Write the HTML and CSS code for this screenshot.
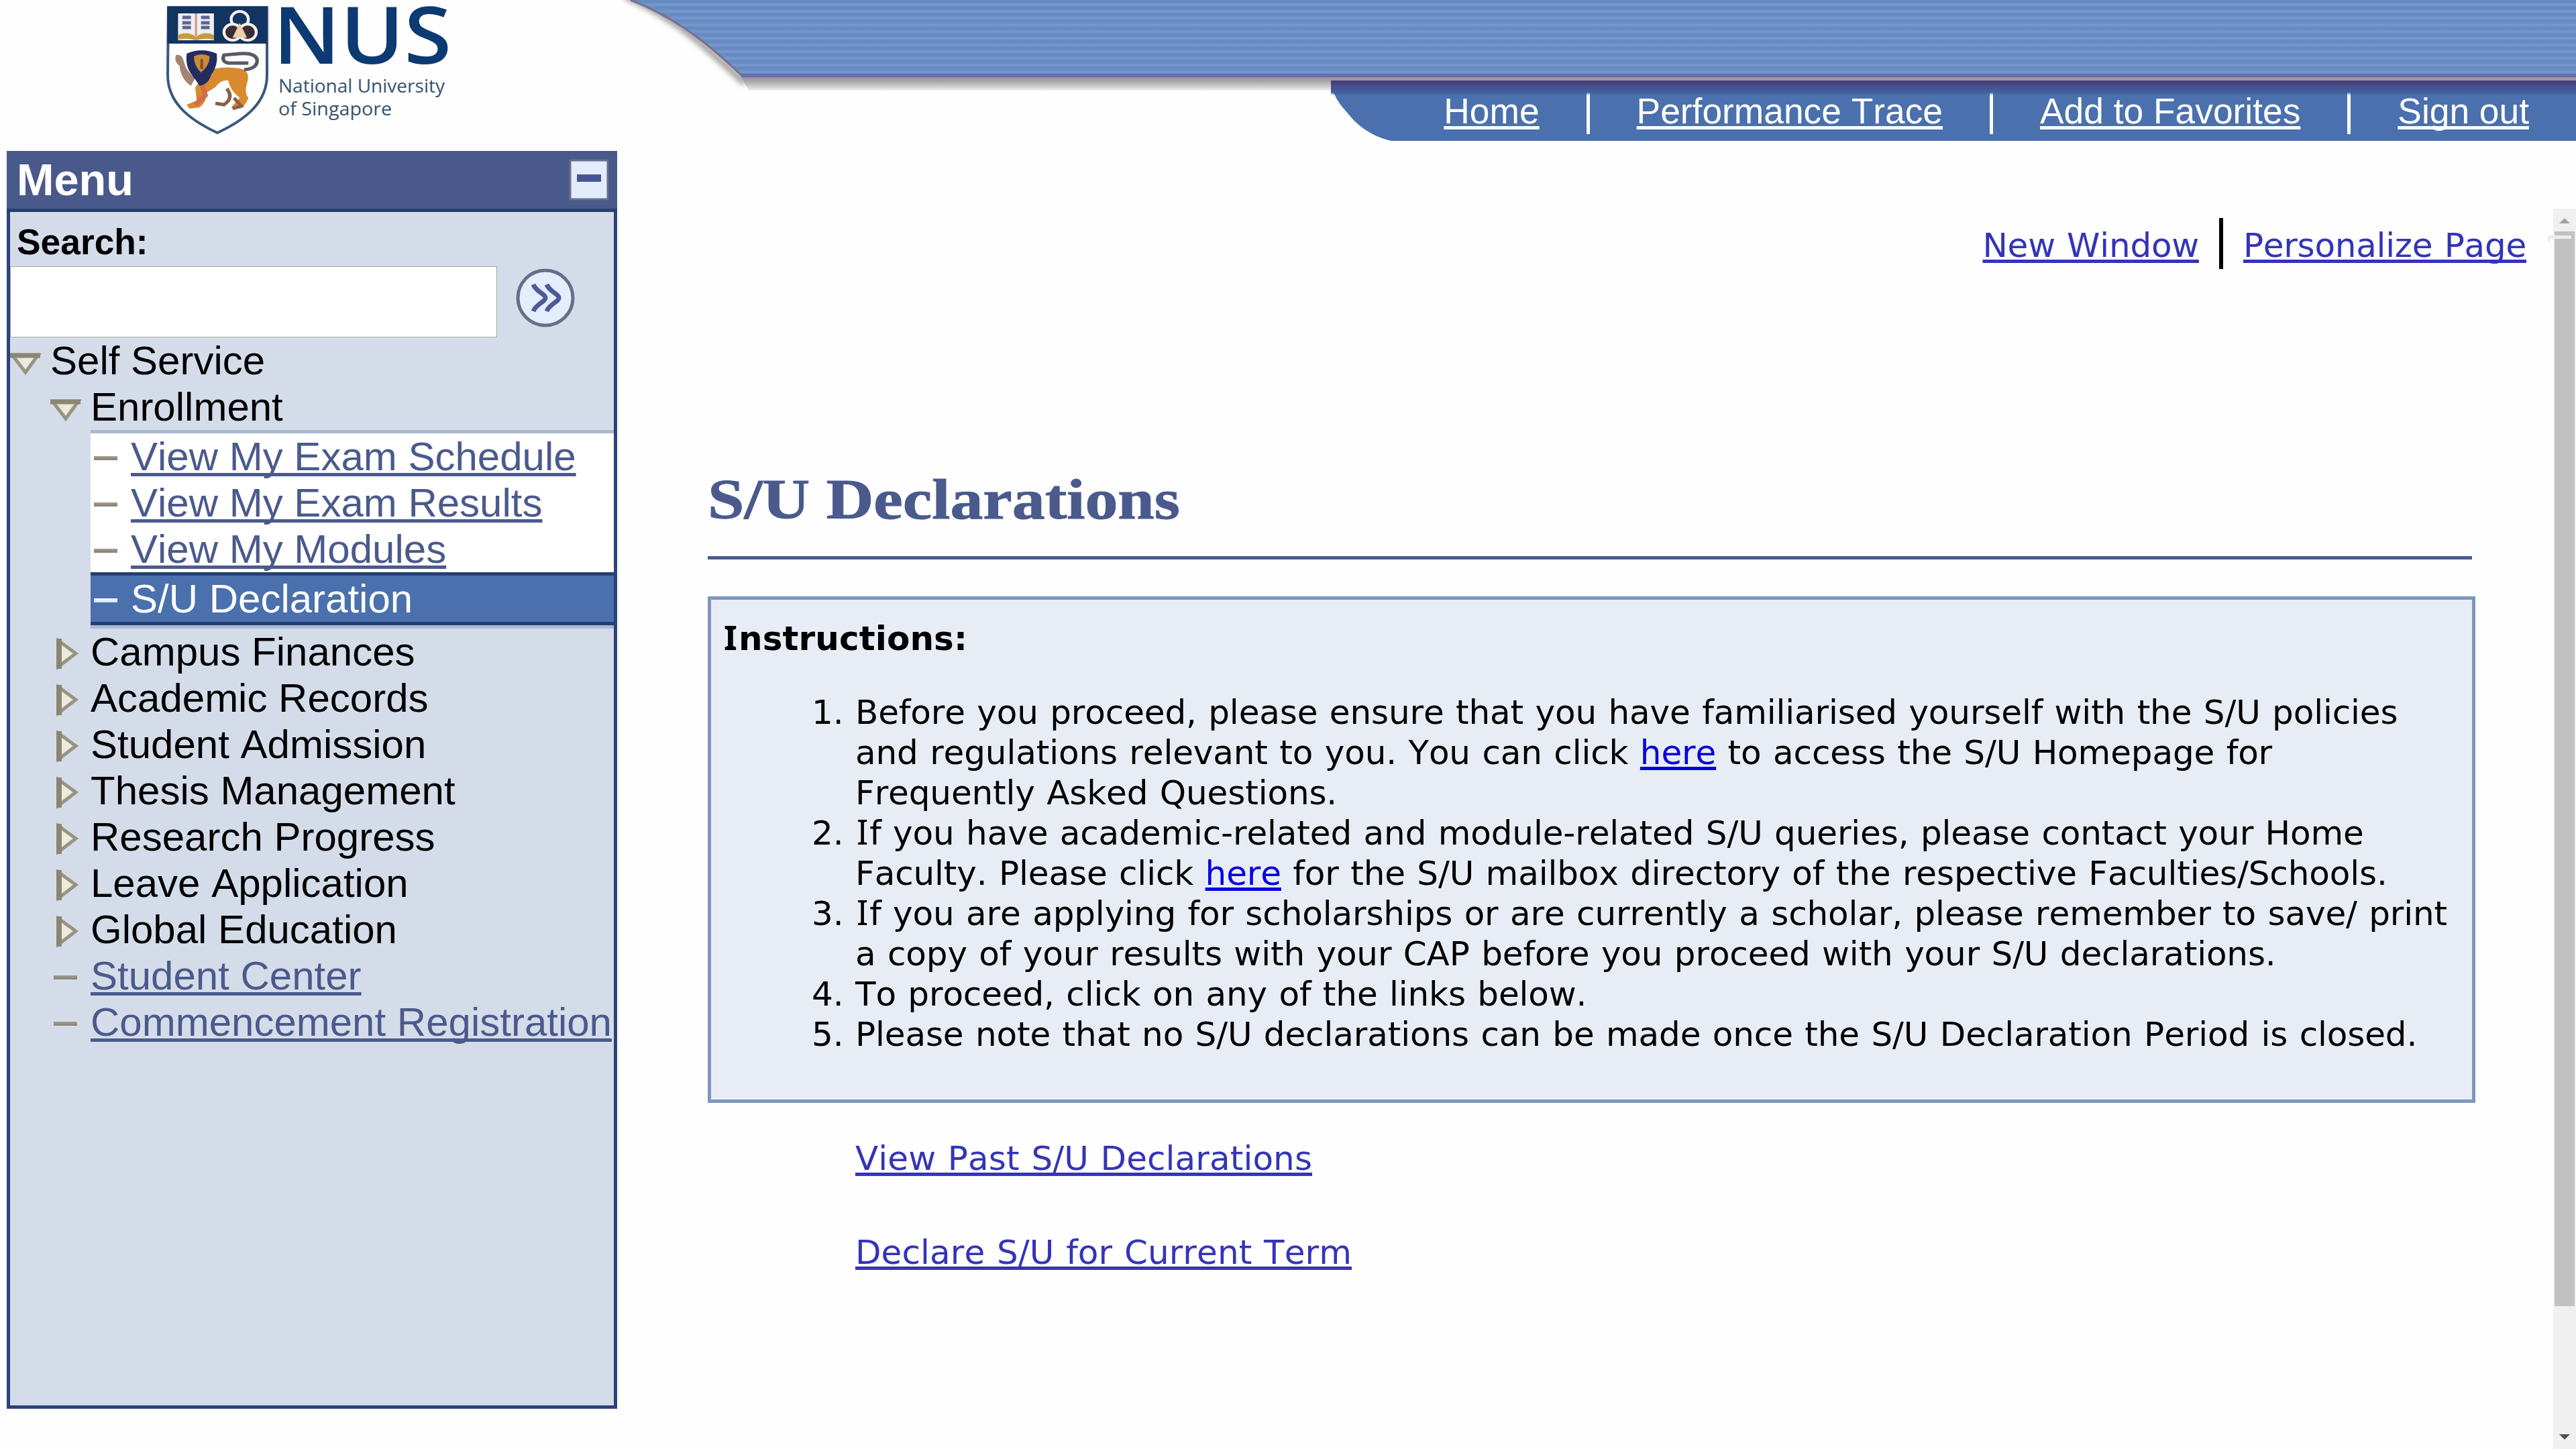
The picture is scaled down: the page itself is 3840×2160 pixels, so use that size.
FILE: index.html
```html
<!DOCTYPE html>
<html lang="en">
<head>
<meta charset="utf-8">
<title>S/U Declarations</title>
<link rel="stylesheet" href="styles.css">
</head>
<body>
<header class="top">
  <svg class="banner" viewBox="0 0 2920 140" width="2920" height="140" aria-hidden="true">
    <defs>
      <linearGradient id="stripe" x1="0" y1="0" x2="0" y2="10" gradientUnits="userSpaceOnUse" spreadMethod="repeat">
        <stop offset="0" stop-color="#678cc4"/><stop offset=".3" stop-color="#658ac1"/><stop offset=".72" stop-color="#789ace"/><stop offset="1" stop-color="#678cc4"/>
      </linearGradient>
      <linearGradient id="shade" x1="0" y1="115" x2="0" y2="136" gradientUnits="userSpaceOnUse">
        <stop offset="0" stop-color="#928e98"/><stop offset=".4" stop-color="#b3b1b4"/><stop offset=".95" stop-color="#efefef"/><stop offset="1" stop-color="#fff"/>
      </linearGradient>
      <filter id="soft" x="-20%" y="-20%" width="140%" height="140%"><feGaussianBlur stdDeviation="4"/></filter>
    </defs>
    <path d="M12 -6C76 22 116 56 140 78C160 96 176 110 190 124" fill="none" stroke="#8f8a8c" stroke-width="8" filter="url(#soft)"/>
    <path d="M184 113H2920V135H196Z" fill="url(#shade)"/>
    <path d="M20 0H2920V115H188C160 88 100 30 20 0Z" fill="url(#stripe)"/>
    <path d="M20 0C100 30 160 88 188 115" fill="none" stroke="#77708f" stroke-width="3"/>
    <path d="M183 110H2920V115H188Z" fill="#6a6bb2"/>
  </svg>
  <svg class="logo" viewBox="0 0 500 200" width="500" height="200" aria-label="NUS National University of Singapore">
    <path d="M4 11H151V112C151 150 124 176 77 198C30 176 3 150 3 112Z" fill="#fdfefe" stroke="#3a587e" stroke-width="4"/>
    <g transform="translate(-3 0) scale(1.07 1)">
    <path d="M5 10H144V65H5Z" fill="#123463"/>
    <path d="M20 20H70V60H20Z" fill="#f0eef2"/>
    <path d="M20 52Q34 46 45 55Q56 46 70 52V59Q56 56 45 60Q34 56 20 59Z" fill="#c99a3c"/>
    <path d="M26 26H38M26 34H38M26 41H38M52 26H64M52 34H64M52 41H64" stroke="#5c6691" stroke-width="5"/>
    <path d="M45 20V54" stroke="#d09a86" stroke-width="3"/>
    <circle cx="106" cy="29" r="12" fill="#123463" stroke="#f5f0ec" stroke-width="4"/>
    <circle cx="96" cy="48" r="12" fill="#3b2d35" stroke="#f5f0ec" stroke-width="4"/>
    <circle cx="117" cy="48" r="12" fill="#3b2d35" stroke="#f5f0ec" stroke-width="4"/>
    <path d="M106 34L96 56H116Z" fill="#eed0b0"/>
    <path d="M17 82Q26 80 28 92Q32 108 44 116L38 128Q24 118 22 98Q14 92 17 82Z" fill="#a48472"/>
    <path d="M64 104Q84 98 106 102Q122 106 116 124Q112 138 118 146Q114 158 106 162L94 160L106 146Q92 134 90 120Q80 118 72 130L60 138Q60 152 50 160L36 162L32 156L46 150L44 130Z" fill="#d98a2c"/>
    <path d="M88 132Q98 146 84 156L72 154M98 146L108 158L96 162" fill="none" stroke="#8c6148" stroke-width="5"/>
    <path d="M54 128L58 142L44 156" fill="none" stroke="#d46c4e" stroke-width="7"/>
    <path d="M32 80Q53 70 74 80Q76 98 66 112Q62 126 50 128Q44 118 38 110Q30 98 32 80Z" fill="#222c61"/>
    <path d="M42 84Q53 78 64 84Q64 98 52 108Q42 98 42 84Z" fill="#c88c34"/>
    <path d="M53 88V103" stroke="#7c5433" stroke-width="4"/>
    <path d="M112 104Q132 102 130 88Q126 78 106 80L84 82Q80 92 90 94H118" fill="none" stroke="#5b5963" stroke-width="5"/>
    </g>
    <text class="nus" x="160" y="95" textLength="266" lengthAdjust="spacingAndGlyphs">NUS</text>
    <g class="uni">
      <text x="168" y="138" textLength="248" lengthAdjust="spacingAndGlyphs">National University</text>
      <text x="168" y="172" textLength="169" lengthAdjust="spacingAndGlyphs">of Singapore</text>
    </g>
  </svg>
  <nav class="nav">
    <svg class="nav-curve" viewBox="0 0 96 90" width="96" height="90" aria-hidden="true"><path d="M0 0H97V90H90C62 84 40 68 26 50C16 38 3 26 0 0Z" fill="#4a70ad"/></svg>
    <div class="nav-links">
      <a href="#">Home</a><a href="#">Performance Trace</a><a href="#">Add to Favorites</a><a href="#">Sign out</a>
    </div>
  </nav>
</header>

<div class="body">
  <aside class="menu">
    <div class="menu-head"><span>Menu</span>
      <svg viewBox="0 0 60 64" width="60" height="64"><rect x="2" y="3" width="56" height="58" fill="#e3ecfb" stroke="#6b6f86" stroke-width="3"/><rect x="12" y="24" width="36" height="11" fill="#465590"/></svg>
    </div>
    <div class="menu-body">
      <label class="search-label" for="q">Search:</label>
      <div class="search"><input id="q" type="text">
        <svg viewBox="0 0 90 90" width="90" height="90"><circle cx="45" cy="45" r="41" fill="#e3edfc" stroke="#686d8a" stroke-width="5"/><path d="M27 25C31 36 45 39 45 45C45 51 31 54 27 65M47 25C51 36 65 39 65 45C65 51 51 54 47 65" fill="none" stroke="#4c5a98" stroke-width="7"/></svg>
      </div>
      <ul class="tree">
        <li class="row l0"><i class="open"></i>Self Service</li>
        <li class="row l1"><i class="open"></i>Enrollment</li>
        <li>
          <ul class="sub">
            <li class="row"><i class="dash"></i><a href="#">View My Exam Schedule</a></li>
            <li class="row"><i class="dash"></i><a href="#">View My Exam Results</a></li>
            <li class="row"><i class="dash"></i><a href="#">View My Modules</a></li>
            <li class="row current"><i class="dash"></i>S/U Declaration</li>
          </ul>
        </li>
        <li class="row l1"><i class="closed"></i>Campus Finances</li>
        <li class="row l1"><i class="closed"></i>Academic Records</li>
        <li class="row l1"><i class="closed"></i>Student Admission</li>
        <li class="row l1"><i class="closed"></i>Thesis Management</li>
        <li class="row l1"><i class="closed"></i>Research Progress</li>
        <li class="row l1"><i class="closed"></i>Leave Application</li>
        <li class="row l1"><i class="closed"></i>Global Education</li>
        <li class="row l1"><i class="dash"></i><a href="#">Student Center</a></li>
        <li class="row l1"><i class="dash"></i><a href="#">Commencement Registration</a></li>
      </ul>
    </div>
  </aside>

  <main class="content">
    <div class="page-links"><a href="#">New Window</a><span class="bar"></span><a href="#">Personalize Page</a></div>
    <h1><span>S/U Declarations</span></h1>
    <hr>
    <section class="box">
      <h2><span class="cap">I</span>nstructions:</h2>
      <ol>
        <li>Before you proceed, please ensure that you have familiarised yourself with the S/U policies<br>and regulations relevant to you. You can click <a href="#">here</a> to access the S/U Homepage for<br>Frequently Asked Questions.</li>
        <li><span class="cap">I</span>f you have academic-related and module-related S/U queries, please contact your Home<br>Faculty. Please click <a href="#">here</a> for the S/U mailbox directory of the respective Faculties/Schools.</li>
        <li><span class="cap">I</span>f you are applying for scholarships or are currently a scholar, please remember to save/ print<br>a copy of your results with your CAP before you proceed with your S/U declarations.</li>
        <li>To proceed, click on any of the links below.</li>
        <li>Please note that no S/U declarations can be made once the S/U Declaration Period is closed.</li>
      </ol>
    </section>
    <div class="actions">
      <a href="#">View Past S/U Declarations</a>
      <a href="#">Declare S/U for Current Term</a>
    </div>
  </main>

  <div class="scroll">
    <svg viewBox="0 0 34 34" width="34" height="34"><path d="M9 22L17 14L25 22Z" fill="#a3a3a3"/></svg>
    <div class="thumb"></div>
    <svg viewBox="0 0 34 34" width="34" height="34"><path d="M9 12L25 12L17 20Z" fill="#505050"/></svg>
    <div class="tick"></div>
  </div>
</div>
</body>
</html>
```
FILE: styles.css
```css
* { box-sizing: border-box; }
html, body { margin: 0; height: 2160px; overflow: hidden; }
body { background: #fefefe; font-family: "Liberation Sans", Arial, sans-serif; font-kerning: none; display: flex; flex-direction: column; }
ul, ol { margin: 0; padding: 0; }
svg { display: block; flex: none; }

.top { position: relative; height: 225px; flex: none; display: flex; justify-content: flex-end; align-items: flex-start; padding-top: 120px; }
.banner { position: absolute; left: 920px; top: 0; }
.logo { position: absolute; left: 247px; top: 0; overflow: visible; }
.nus { font-family: "Open Sans", sans-serif; font-size: 118px; font-weight: 600; fill: #0c3a72; }
.uni { font-family: "Open Sans", sans-serif; font-size: 27px; font-weight: 500; fill: #35536f; }
.nav { position: relative; display: flex; height: 90px; width: 1856px; }
.nav::after { content: ""; position: absolute; left: 0; right: 0; top: 0; height: 22px; background: linear-gradient(#433974, #4a4f90 45%, #3c619e 80%, #4a70ad00); pointer-events: none; }
.nav-links { flex: 1; background: #4a70ad; display: flex; align-items: flex-start; justify-content: flex-end; padding: 15px 0 0; }
.nav-links a { color: #fff; font-size: 53.33px; line-height: 61px; height: 65px; padding: 0 70px; text-decoration: underline; text-decoration-thickness: 5px; text-underline-offset: 4px; text-decoration-skip-ink: none; white-space: nowrap; border-right: 5px solid #fff; }
.nav-links a:last-child { border-right: 0; }

.body { flex: 1; display: flex; min-height: 0; }
.menu { width: 910px; height: 1875px; margin-left: 10px; flex: none; background: #d5dce9; display: flex; flex-direction: column; }
.menu-head { height: 91px; padding: 0 12px 0 15px; border-bottom: 5px solid #263f70; background: #4a598b; color: #fff; font-size: 66.67px; font-weight: 700; line-height: 86px; display: flex; justify-content: space-between; align-items: center; }
.menu-body { flex: 1; border: 5px solid #2a4378; border-top: 0; }
.search-label { display: block; height: 81px; padding: 16px 0 0 10px; font-size: 53.33px; font-weight: 700; line-height: 58px; color: #000; }
.search { display: flex; height: 106px; align-items: center; gap: 27px; }
.search svg { margin-top: -12px; }
.search input { width: 726px; height: 106px; border: 1px solid #a5a5a5; background: #fff; }

.row { display: flex; height: 69px; line-height: 69px; font-size: 60px; white-space: nowrap; color: #000; }
.row a { color: #4a5a8c; text-decoration: underline; text-decoration-thickness: 5px; text-underline-offset: 4px; text-decoration-skip-ink: none; }
.row i { flex: none; width: 60px; height: 69px; background-repeat: no-repeat; }
.l1 { padding-left: 60px; }
.tree, .sub { list-style: none; }
.open { background-image: url("data:image/svg+xml,%3Csvg xmlns='http://www.w3.org/2000/svg' width='60' height='69'%3E%3Cpath d='M3 26H42L23 52Z' fill='%23ece9dd' stroke='%23989484' stroke-width='5'/%3E%3Cpath d='M0 27H45' stroke='%238a8672' stroke-width='7'/%3E%3C/svg%3E"); }
.closed { background-image: url("data:image/svg+xml,%3Csvg xmlns='http://www.w3.org/2000/svg' width='60' height='69'%3E%3Cpath d='M12 18L38 37L12 57Z' fill='%23ece9dd' stroke='%23989484' stroke-width='5'/%3E%3Cpath d='M13 15V60' stroke='%238a8672' stroke-width='8'/%3E%3C/svg%3E"); }
.dash { background-image: linear-gradient(#a39e91, #857f70); background-size: 35px 6px; background-position: 5px 34px; }
.sub { margin-left: 120px; background: #fff; border-top: 5px solid #a7b8d3; border-bottom: 5px solid #a7b8d3; }
.current { height: 79px; background: #4a70ad; color: #fff; border-top: 5px solid #263f70; border-bottom: 5px solid #263f70; }
.current .dash { background-image: linear-gradient(#fff, #cfdcf5); }

.content { flex: 1; padding: 99px 40px 0 135px; font-family: "DejaVu Sans", Verdana, sans-serif; font-size: 50px; letter-spacing: -.0025em; word-spacing: .034em; color: #000; }
.content a { text-decoration: underline; text-decoration-thickness: 5px; text-underline-offset: 4px; text-decoration-skip-ink: none; }
.page-links { display: flex; justify-content: flex-end; height: 78px; line-height: 85px; white-space: nowrap; letter-spacing: -.005em; }
.page-links a, .actions a { color: #3434b8; }
.bar { width: 6px; height: 76px; margin: 1px 30px 0; background: #000; }
h1 { margin: 292px 0 0; height: 135px; font: 700 85px/100px "Liberation Serif", Georgia, serif; letter-spacing: 0; word-spacing: 0; color: #4a5a8c; -webkit-text-stroke: 1px #4a5a8c; }
h1 span { display: inline-block; transform: scaleX(1.151); transform-origin: 0 0; }
hr { width: 2630px; height: 5px; margin: 0; border: 0; background: #4a5a8c; }
.box { width: 2635px; height: 755px; margin-top: 55px; border: 5px solid #7d97bd; background: #e8edf5; padding: 28px 0 0 17px; }
h2 { margin: 0; font-size: 50px; line-height: 60px; font-weight: 700; letter-spacing: .002em; }
.cap { font-family: "Noto Sans", sans-serif; font-size: 51px; line-height: 0; padding: 0 2px; }
ol { padding-left: 198px; margin-top: 50px; line-height: 60px; white-space: nowrap; }
ol a { color: #0000e0; }
.actions { display: flex; flex-direction: column; align-items: flex-start; gap: 80px; padding: 53px 0 0 220px; line-height: 60px; letter-spacing: .002em; }

.scroll { position: relative; width: 34px; flex: none; margin-top: 86px; background: #f0f0f0; display: flex; flex-direction: column; }
.thumb { width: 30px; height: 1602px; margin: 0 2px auto; background: #c1c1c1; }
.tick { position: absolute; left: -8px; top: 40px; width: 35px; height: 9px; border-top: 5px solid #ededed; border-left: 4px solid #ededed; }
```
